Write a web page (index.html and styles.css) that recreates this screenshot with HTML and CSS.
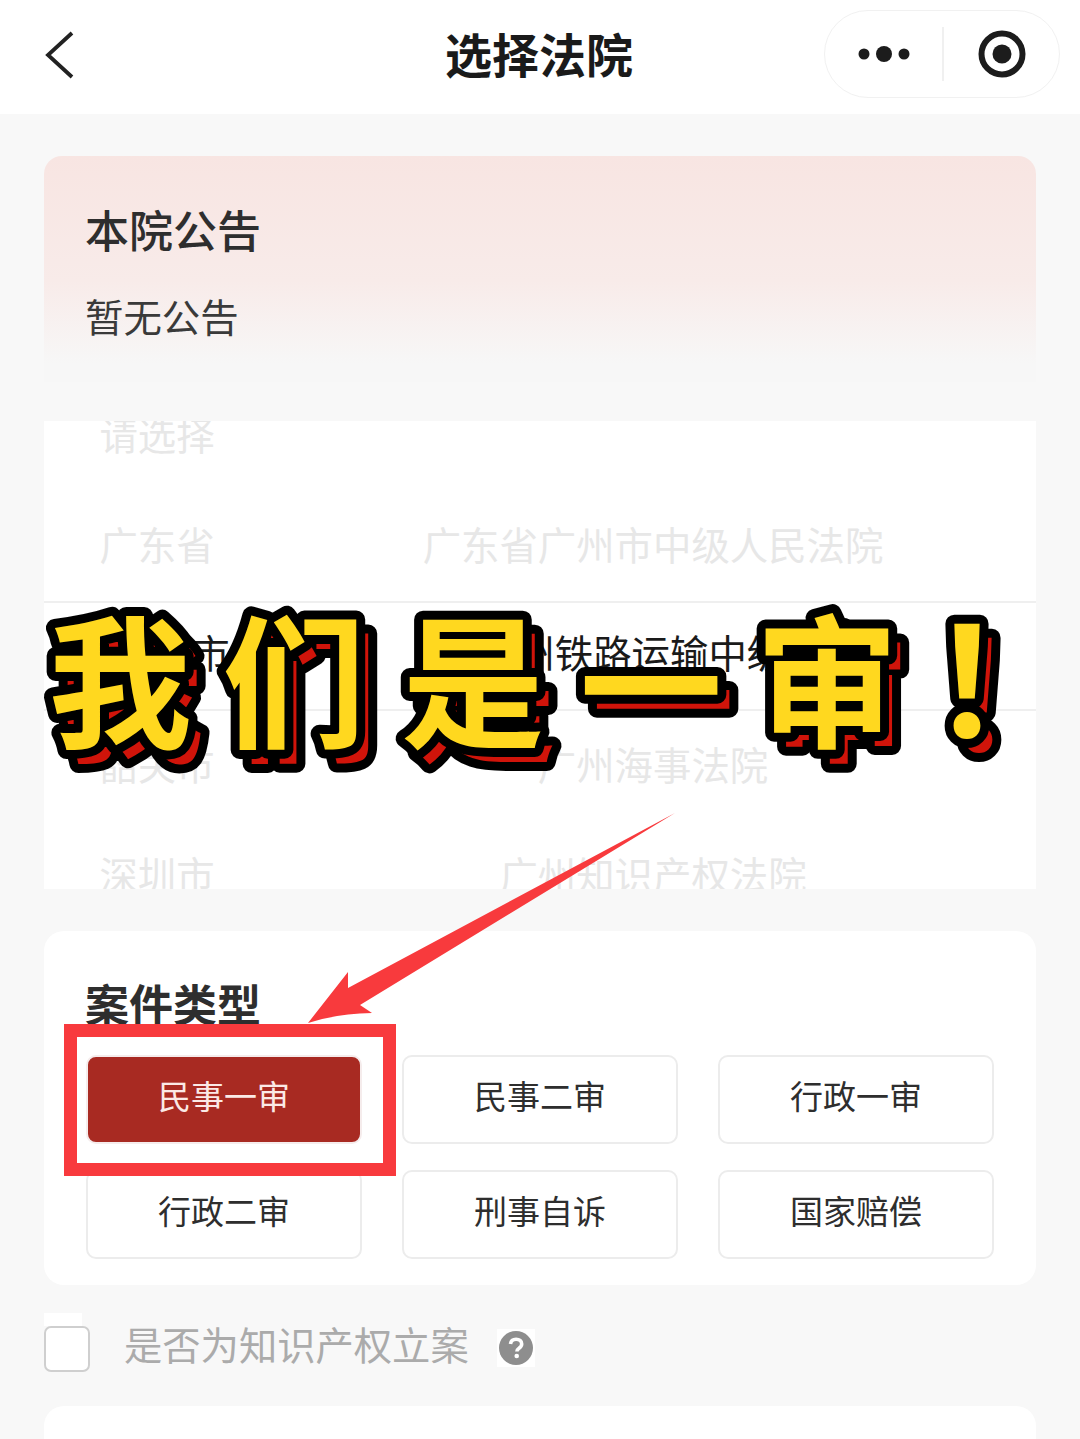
FILE: index.html
```html
<!DOCTYPE html>
<html lang="zh-CN">
<head>
<meta charset="utf-8">
<title>选择法院</title>
<link rel="stylesheet" href="styles.css">
</head>
<body>
<div class="page">
  <header class="navbar">
    <svg class="back" viewBox="0 0 40 60" aria-hidden="true"><polyline points="29,4 5,26 29,48"/></svg>
    <h1 class="nav-title">选择法院</h1>
    <div class="capsule">
      <div class="capsule-more">
        <svg viewBox="0 0 60 20" class="more-icon" aria-hidden="true"><circle cx="10" cy="10" r="5.5"/><circle cx="30" cy="10" r="8"/><circle cx="50" cy="10" r="5.5"/></svg>
      </div>
      <div class="capsule-close">
        <svg viewBox="0 0 50 50" class="close-icon" aria-hidden="true"><circle cx="25" cy="25" r="20.5" class="ring"/><circle cx="25" cy="25" r="9.5"/></svg>
      </div>
    </div>
  </header>

  <main class="content">
    <section class="notice">
      <h2 class="section-title">本院公告</h2>
      <p class="notice-text">暂无公告</p>
    </section>

    <section class="picker">
      <div class="picker-rows">
        <div class="picker-row faded"><span>请选择</span><span></span></div>
        <div class="picker-row faded"><span>广东省</span><span>广东省广州市中级人民法院</span></div>
        <div class="picker-row active"><span>广州市</span><span>广州铁路运输中级法院</span></div>
        <div class="picker-row faded"><span>韶关市</span><span>广州海事法院</span></div>
        <div class="picker-row faded"><span>深圳市</span><span>广州知识产权法院</span></div>
      </div>
    </section>

    <section class="types">
      <h2 class="section-title strong">案件类型</h2>
      <div class="type-grid">
        <div class="type-btn selected">民事一审</div>
        <div class="type-btn">民事二审</div>
        <div class="type-btn">行政一审</div>
        <div class="type-btn">行政二审</div>
        <div class="type-btn">刑事自诉</div>
        <div class="type-btn">国家赔偿</div>
      </div>
    </section>

    <div class="ip-row">
      <span class="checkbox"></span>
      <span class="ip-label">是否为知识产权立案</span>
      <span class="help"><svg viewBox="0 0 38 38" aria-hidden="true"><circle cx="19" cy="19" r="17"/><path d="M13.500 15c.4-3 2.700-4.800 5.600-4.800 3.200 0 5.600 1.900 5.600 4.700 0 2.200-1.200 3.200-2.700 4.300-1.500 1-2.100 1.800-2.100 3.400" class="q"/><circle cx="19.700" cy="27" r="2.300" class="dot"/></svg></span>
    </div>

    <section class="next-card"></section>
  </main>

  <svg class="sticker" viewBox="0 0 1080 1439">
    <defs>
      <g id="sticker-text">
        <text x="120" y="737">我</text>
        <text x="294" y="737">们</text>
        <text x="473" y="737">是</text>
        <text x="651" y="741">一</text>
        <text x="827" y="737">审</text>
        <text x="1005" y="738" class="bang">！</text>
      </g>
    </defs>
    <use href="#sticker-text" class="layer-red"/>
    <use href="#sticker-text" class="layer-yellow"/>
  </svg>

  <div class="red-box"></div>
  <svg class="arrow" viewBox="0 0 1080 1439" aria-hidden="true">
    <path d="M675 813 L360 1005 L372 1013 Q335 1014 308 1023 L348 972 L348 988 Z"/>
  </svg>
</div>
</body>
</html>
```
FILE: styles.css
```css
* { box-sizing: border-box; margin: 0; padding: 0; }
html, body { width: 1080px; height: 1439px; overflow: hidden; background: #f8f8f8; }
body { font-family: "Noto Sans CJK SC", "Noto Sans", sans-serif; color: #2b2b2b; }
.page { position: relative; width: 1080px; height: 1439px; overflow: hidden; }

.navbar { position: relative; height: 114px; background: #fff; display: flex; align-items: center; justify-content: center; }
.back { position: absolute; left: 43px; top: 29px; width: 40px; height: 60px; fill: none; stroke: #222; stroke-width: 3.8; }
.nav-title { font-size: 47px; font-weight: 700; color: #1a1a1a; line-height: 1; padding-bottom: 10px; padding-right: 2px; }
.capsule { position: absolute; left: 824px; top: 10px; width: 236px; height: 88px; border: 1.500px solid #f1f1f1; border-radius: 44px; display: flex; align-items: center; }
.capsule-more { width: 119px; height: 54px; border-right: 2px solid #f0f0f0; display: flex; align-items: center; justify-content: center; }
.more-icon { width: 60px; height: 20px; fill: #1c1c1c; }
.capsule-close { flex: 1; display: flex; align-items: center; justify-content: center; }
.close-icon { width: 50px; height: 50px; fill: #1c1c1c; }
.close-icon .ring { fill: none; stroke: #1c1c1c; stroke-width: 6; }

.content { padding: 42px 44px 0; display: flex; flex-direction: column; }
.notice { height: 226px; padding: 43px 41px 0; border-radius: 18px 18px 0 0; background: linear-gradient(180deg, #f8e5e2 0%, #f8ebe9 55%, #f7f7f7 92%); }
.section-title { font-size: 44px; font-weight: 500; line-height: 60px; color: #2e2e2e; }
.section-title.strong { font-weight: 700; margin-left: -1px; }
.notice-text { margin-top: 28px; font-size: 38.400px; line-height: 56px; color: #3a3a3a; }

.picker { margin-top: 39px; height: 468px; background: #fff; overflow: hidden; }
.picker-rows { margin-top: -40px; }
.picker-row { height: 110px; display: grid; grid-template-columns: 226px 1fr; align-items: center; text-align: center; font-size: 38.400px; }
.picker-row span { padding-bottom: 6px; }
.picker-row.faded { color: #e7e7e7; }
.picker-row.active { color: #1a1a1a; border-top: 2px solid #efefef; border-bottom: 2px solid #efefef; }
.picker-row.active span { padding-left: 34px; padding-bottom: 10px; }
.picker-row.active span:first-child { padding-left: 30px; }

.types { margin-top: 42px; height: 354px; padding: 42px 42px 0; background: #fff; border-radius: 20px; }
.section-title + .type-grid { margin-top: 22px; }
.type-grid { display: grid; grid-template-columns: repeat(3, 276px); column-gap: 40px; row-gap: 26px; }
.type-btn { height: 89px; display: flex; align-items: center; justify-content: center; padding-bottom: 9px; border: 2px solid #ececec; border-radius: 10px; font-size: 33px; color: #2e2e2e; background: #fff; }
.type-btn.selected { background: #a82a22; color: #fbe9e6; border-color: #f5ecec; }

.ip-row { margin-top: 41px; height: 46px; display: flex; align-items: center; }
.checkbox { position: relative; width: 46px; height: 46px; background: #fff; border: 2px solid #cfcfcf; border-radius: 7px; }
.checkbox::before { content: ""; position: absolute; left: -2px; top: -15px; width: 38px; height: 13px; background: #fff; }
.ip-label { margin-left: 34px; padding-bottom: 12px; font-size: 38.300px; color: #ababab; white-space: nowrap; }
.help { margin-left: 28px; width: 38px; height: 38px; background: #fff; margin-bottom: 3px; }
.help svg { display: block; width: 38px; height: 38px; fill: #8e8e8e; }
.help .q { fill: none; stroke: #fff; stroke-width: 3.600; }
.help .dot { fill: #fff; }

.next-card { margin-top: 34px; height: 120px; background: #fff; border-radius: 20px; }

.sticker { position: absolute; left: 0; top: 0; width: 1080px; height: 1439px; font-size: 143px; font-weight: 700; text-anchor: middle; pointer-events: none; stroke: #000; stroke-width: 18px; stroke-linejoin: round; paint-order: stroke fill; }
.sticker .bang { font-size: 152px; }
.layer-red { fill: #d0140a; transform: translate(12px, 14px); }
.layer-yellow { fill: #ffd81f; }

.red-box { position: absolute; left: 64px; top: 1024px; width: 332px; height: 152px; border: 13px solid #f83a3d; }
.arrow { position: absolute; left: 0; top: 0; width: 1080px; height: 1439px; fill: #f83a3d; pointer-events: none; }
```
